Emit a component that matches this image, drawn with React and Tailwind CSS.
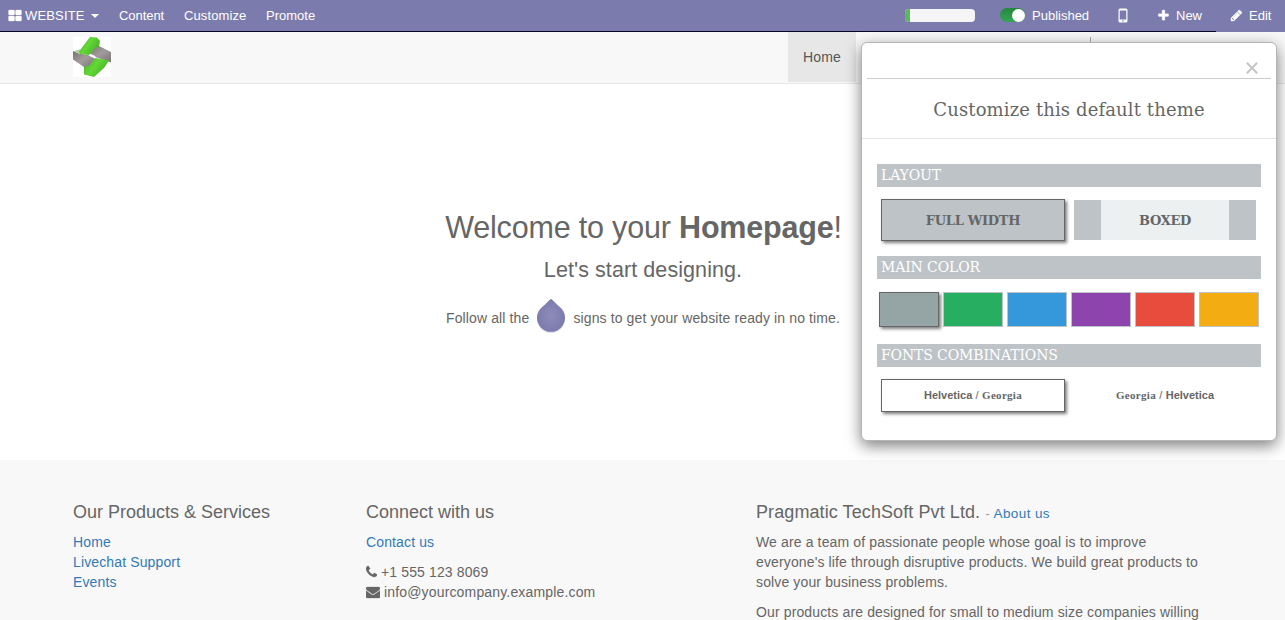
const icons = {
  grid: "M832 1024v384q0 52-38 90t-90 38h-512q-52 0-90-38t-38-90v-384q0-52 38-90t90-38h512q52 0 90 38t38 90zm0-768v384q0 52-38 90t-90 38h-512q-52 0-90-38t-38-90v-384q0-52 38-90t90-38h512q52 0 90 38t38 90zm896 768v384q0 52-38 90t-90 38h-512q-52 0-90-38t-38-90v-384q0-52 38-90t90-38h512q52 0 90 38t38 90zm0-768v384q0 52-38 90t-90 38h-512q-52 0-90-38t-38-90v-384q0-52 38-90t90-38h512q52 0 90 38t38 90z",
  plus: "M1600 736v192q0 40-28 68t-68 28h-416v416q0 40-28 68t-68 28h-192q-40 0-68-28t-28-68v-416h-416q-40 0-68-28t-28-68v-192q0-40 28-68t68-28h416v-416q0-40 28-68t68-28h192q40 0 68 28t28 68v416h416q40 0 68 28t28 68z",
  pencil: "M491 1536l91-91-235-235-91 91v107h128v128h107zm523-928q0-22-22-22-10 0-17 7l-542 542q-7 7-7 17 0 22 22 22 10 0 17-7l542-542q7-7 7-17zm-54-192l416 416-832 832h-416v-416zm683 96q0 53-37 90l-166 166-416-416 166-165q36-38 90-38 53 0 91 38l235 234q37 39 37 91z",
  phone: "M1408 1240q0 27-10 70.500t-21 68.500q-21 50-122 106-94 51-186 51-27 0-53-3.500t-57.500-12.500-47-14.500-55.500-20.500-49-18q-98-35-175-83-127-79-264-216t-216-264q-48-77-83-175-3-9-18-49t-20.500-55.500-14.500-47-12.500-57.500-3.500-53q0-92 51-186 56-101 106-122 25-11 68.500-21t70.500-10q14 0 21 3 18 6 53 76 11 19 30 54t35 63.500 31 53.500q3 4 17.500 25t21.500 35.500 7 28.500q0 20-28.500 50t-62 55-62 53-28.500 46q0 9 5 22.500t8.500 20.500 14 24 11.500 19q76 137 174 235t235 174q2 1 19 11.500t24 14 20.500 8.500 22.500 5q18 0 46-28.500t53-62 55-62 50-28.500q14 0 28.500 7t35.500 21.500 25 17.500q25 15 53.500 31t63.500 35 54 30q70 35 76 53 3 7 3 21z",
  envelope: "M1792 710v794q0 66-47 113t-113 47h-1472q-66 0-113-47t-47-113v-794q44 49 101 87 362 246 497 345 57 42 92.500 65.500t94.500 48 110 24.500h2q51 0 110-24.500t94.500-48 92.500-65.500q170-123 498-345 57-39 100-87zm0-294q0 79-49 151t-122 123q-376 261-468 325-10 7-42.500 31t-54 38.500-52 32.500-57.500 27-50 9h-2q-23 0-50-9t-57.500-27-52-32.500-54-38.500-42.500-31q-91-64-262-182.500t-205-142.500q-62-42-117-115.500t-55-136.500q0-78 41.500-130t118.500-52h1472q65 0 112.500 47t47.500 113z",
};

function Icon({ name, viewBox = "0 0 1792 1792", className }) {
  return (
    <svg viewBox={viewBox} className={className} fill="currentColor">
      <path d={icons[name]} stroke="currentColor" strokeWidth="40" />
    </svg>
  );
}

function Toolbar() {
  return (
    <div className="flex h-8 flex-col bg-[#7c7bad] text-[13px] leading-[31px] text-white">
      <div className="flex h-[31px] items-center whitespace-nowrap">
        <div className="flex w-[119px] shrink-0 items-center pl-2">
          <Icon name="grid" className="mr-[3px] size-[14px]" />
          <span className="tracking-[0.15px]">WEBSITE</span>
          <svg className="ml-1.5 h-1 w-2" viewBox="0 0 8 4" fill="currentColor">
            <path d="M0 0h8L4 4z" />
          </svg>
        </div>
        <span className="w-[65px] tracking-[-0.05px]">Content</span>
        <span className="w-[82px] tracking-[0.1px]">Customize</span>
        <span>Promote</span>
        <div className="ml-auto flex h-[13px] w-[70px] overflow-hidden rounded bg-[#f5f5f5]">
          <div className="w-[5px] bg-[#5cb85c]" />
        </div>
        <div className="ml-[25px] mt-[-2px] flex h-[14px] w-[25px] justify-end rounded-full bg-linear-to-b from-[#24863f] to-[#35a655] pt-px">
          <div className="size-[13px] rounded-full bg-white" />
        </div>
        <span className="ml-[7px] w-[86px]">Published</span>
        <svg className="h-[15px] w-[10px]" viewBox="0 0 10 15">
          <path
            fill="currentColor"
            fillRule="evenodd"
            d="M2 .5h6Q9.500.5 9.500 2v11q0 1.500-1.500 1.500H2Q.5 14.500.5 13V2Q.5.5 2 .5ZM1.700 2.500v9h6.600v-9Zm2.600 9.800v1.200h1.400v-1.200Z"
          />
        </svg>
        <Icon name="plus" className="ml-[29px] size-[13px]" />
        <span className="ml-1.5 w-[54px]">New</span>
        <Icon name="pencil" className="size-[13px]" />
        <span className="ml-1.5 w-9">Edit</span>
      </div>
      <div className="h-px w-[1216px] bg-[#07071d]" />
    </div>
  );
}

function Logo() {
  return (
    <svg className="h-10 w-[38px] bg-white" viewBox="0 0 38 40">
      <defs>
        <linearGradient id="green" x1="0" x2="1" y1="0" y2="0.6">
          <stop offset="0" stopColor="#4aa52c" />
          <stop offset="0.5" stopColor="#62d835" />
          <stop offset="1" stopColor="#46b028" />
        </linearGradient>
        <linearGradient id="grey" x1="0" x2="1" y1="0" y2="1">
          <stop offset="0" stopColor="#777273" />
          <stop offset="0.5" stopColor="#a39b9d" />
          <stop offset="1" stopColor="#787475" />
        </linearGradient>
      </defs>
      <path d="M20 10L25 8.500L38 15V25.500L34 24L22 20L16 16Z" fill="url(#grey)" />
      <path d="M0 14L6 16.500L15 18L22 21.500L17 30L11 30L0 22.500Z" fill="url(#grey)" />
      <path d="M1 14l6-1.500v5z" fill="#a9cf9d" />
      <path d="M17 0L24 .5L27 4L26 9.500L22 11L16 18L7 17L6 14.500Z" fill="url(#green)" />
      <path d="M22 21L28 22L36 23.500L31 31L21 40L11 37.500V29.500L16 29Z" fill="url(#green)" />
      <path d="M16 18.500l2.500-1.200 4 2-.5 2.200z" fill="#fff" />
    </svg>
  );
}

function Header() {
  return (
    <header className="flex h-[52px] border-b border-[#e7e7e7] bg-[#f8f8f8] pl-[73px]">
      <div className="pt-[5px]">
        <Logo />
      </div>
      <a className="ml-[677px] h-[50px] w-[68px] bg-[#e7e7e7] pl-[15px] text-sm leading-[50px] tracking-[0.15px] text-[#555]">
        Home
      </a>
      <div className="ml-[234px] mt-[5px] h-5 w-px bg-[#aaa]" />
    </header>
  );
}

function Hero() {
  return (
    <main className="flex h-[376px] flex-col items-center bg-white pt-[126px]">
      <h1 className="h-[34px] pl-0.5 text-[30.500px] leading-[34px] tracking-[-0.18px] whitespace-nowrap">
        Welcome to your <b>Homepage</b>!
      </h1>
      <h2 className="mt-[14px] pl-px text-[21.500px] leading-[24px] tracking-[0.08px] whitespace-nowrap">
        Let's start designing.
      </h2>
      <div className="mt-4 flex h-9 items-center pl-px text-sm tracking-[0.12px] whitespace-nowrap">
        <span className="pt-[3px]">Follow all the</span>
        <svg className="mx-[6px] mt-[-2px] h-10 w-8" viewBox="0 0 32 40">
          <defs>
            <radialGradient id="drop">
              <stop offset="0" stopColor="#8e8cb9" />
              <stop offset="1" stopColor="#7c7bad" />
            </radialGradient>
          </defs>
          <circle cx="16" cy="24" r="14" fill="#7c7bad" opacity="0.25" />
          <path
            d="M14.800 4.700Q16 3.500 17.200 4.700L20.500 8Q22 9.700 24.500 11.700A14 14 0 1 1 7.500 11.700Q10 9.700 11.500 8Z"
            fill="url(#drop)"
          />
        </svg>
        <span className="pt-[3px]">signs to get your website ready in no time.</span>
      </div>
    </main>
  );
}

function Footer() {
  return (
    <footer className="flex h-[160px] overflow-hidden bg-[#f8f8f8] pl-[73px] pt-[42px] text-sm leading-5 tracking-[0.13px]">
      <div className="w-[293px]">
        <h4 className="mb-[10px] text-lg leading-5 tracking-normal">Our Products &amp; Services</h4>
        <ul className="text-[#337ab7]">
          <li>Home</li>
          <li>Livechat Support</li>
          <li>Events</li>
        </ul>
      </div>
      <div className="w-[390px]">
        <h4 className="mb-[10px] text-lg leading-5 tracking-normal">Connect with us</h4>
        <p className="mb-[10px] text-[#337ab7]">Contact us</p>
        <p className="flex items-center">
          <Icon name="phone" viewBox="0 0 1408 1792" className="mr-1 h-[14px] w-[11px]" />
          +1 555 123 8069
        </p>
        <p className="flex items-center tracking-[0.16px]">
          <Icon name="envelope" className="mr-1 size-[14px]" />
          info@yourcompany.example.com
        </p>
      </div>
      <div className="w-[460px] whitespace-nowrap">
        <h4 className="mb-[10px] text-lg leading-5 tracking-[0.09px]">
          Pragmatic TechSoft Pvt Ltd.{" "}
          <small className="text-[13.500px] leading-none tracking-[0.38px] text-[#999]">
            - <span className="text-[#337ab7]">About us</span>
          </small>
        </h4>
        <p className="mb-[10px]">
          We are a team of passionate people whose goal is to improve
          <br />
          everyone's life through disruptive products. We build great products to
          <br />
          solve your business problems.
        </p>
        <p>Our products are designed for small to medium size companies willing</p>
      </div>
    </footer>
  );
}

function SectionTitle({ children }) {
  return (
    <h5 className="h-[23px] bg-[#bdc3c7] pl-1 text-sm leading-[23px] tracking-[-0.12px] text-white">{children}</h5>
  );
}

const swatches = ["bg-[#27ae60]", "bg-[#3498db]", "bg-[#8e44ad]", "bg-[#e74c3c]", "bg-[#f3ac12]"];

function Helvetica() {
  return <span className="font-['Liberation_Sans',sans-serif]">Helvetica</span>;
}

function Georgia() {
  return <span className="font-['Liberation_Serif',serif] tracking-[0.3px]">Georgia</span>;
}

function Slash() {
  return <span className="font-['Liberation_Sans',sans-serif] font-normal tracking-[0.2px]"> / </span>;
}

function ThemeDialog() {
  return (
    <div className="absolute left-[861px] top-[42px] h-[399px] w-[416px] rounded-md border border-[#b5b5b5] bg-white font-['DejaVu_Serif',serif] shadow-[0_5px_15px_rgba(0,0,0,0.5)]">
      <div className="mx-[5px] flex h-9 justify-end border-b border-[#ccc] pr-[13px] pt-[19px]">
        <svg className="size-3" viewBox="0 0 12 12" stroke="#c6c6c6" strokeWidth="2.200">
          <path d="M.8.800l10.400 10.400M11.200.800L.8 11.200" />
        </svg>
      </div>
      <h3 className="h-[60px] border-b border-[#e5e5e5] pt-[19px] text-center text-lg leading-6 tracking-[0.12px]">
        Customize this default theme
      </h3>
      <div className="px-[15px] pt-[25px]">
        <SectionTitle>LAYOUT</SectionTitle>
        <div className="mb-[15px] mt-3 flex h-[42px] items-center gap-[9px] px-1 text-[13px] font-bold tracking-[-0.3px]">
          <div className="flex h-[42px] w-[184px] items-center justify-center border border-[#666] bg-[#bdc3c7] pt-0.5 shadow-[2px_2px_3px_rgba(0,0,0,0.5)]">
            FULL WIDTH
          </div>
          <div className="flex h-10 w-[182px] items-center justify-center border-x-[27px] border-[#bdc3c7] bg-[#ecf0f1] pt-0.5">
            BOXED
          </div>
        </div>
        <SectionTitle>MAIN COLOR</SectionTitle>
        <div className="mb-[17px] mt-[13px] flex h-[35px] gap-1 pl-0.5">
          <div className="h-[35px] w-[60px] border border-[#666] bg-[#95a5a5] shadow-[2px_2px_3px_rgba(0,0,0,0.5)]" />
          {swatches.map((color) => (
            <div key={color} className={`h-[35px] w-[60px] border border-[#bdc3c7] ${color}`} />
          ))}
        </div>
        <SectionTitle>FONTS COMBINATIONS</SectionTitle>
        <div className="mt-3 flex gap-2 px-1 text-[11px] font-bold">
          <div className="flex h-[33px] w-[184px] items-center justify-center border border-[#666] shadow-[2px_2px_3px_rgba(0,0,0,0.5)]">
            <p>
              <Helvetica />
              <Slash />
              <Georgia />
            </p>
          </div>
          <div className="flex h-[33px] w-[184px] items-center justify-center">
            <p>
              <Georgia />
              <Slash />
              <Helvetica />
            </p>
          </div>
        </div>
      </div>
    </div>
  );
}

export default function App() {
  return (
    <div className="relative h-[620px] w-[1285px] overflow-hidden bg-white font-['Liberation_Sans',Arial,sans-serif] text-[#666]">
      <Toolbar />
      <Header />
      <Hero />
      <Footer />
      <ThemeDialog />
    </div>
  );
}
